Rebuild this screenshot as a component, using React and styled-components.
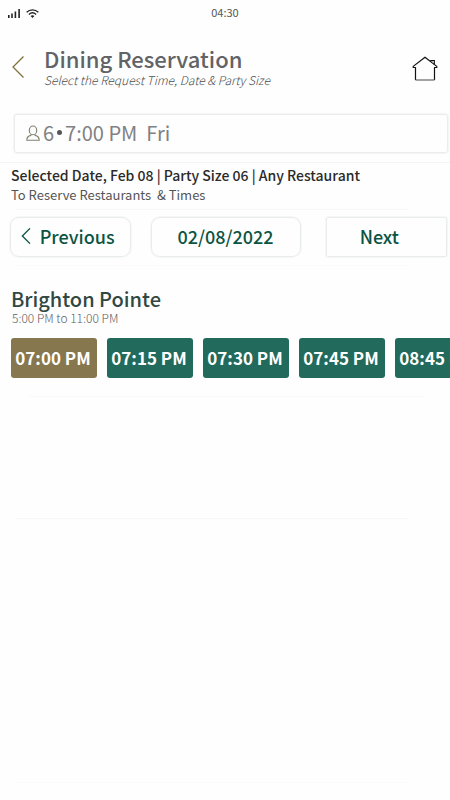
import React, { useState } from "react";
import styled, { createGlobalStyle } from "styled-components";

const GlobalStyle = createGlobalStyle`
  *, *::before, *::after { box-sizing: border-box; }
  body {
    margin: 0;
    background: #fefefe;
    font-family: "Noto Sans CJK SC", "Noto Sans", sans-serif;
  }
  h1, h2, p { margin: 0; }
  button { font: inherit; cursor: pointer; }
`;

const Page = styled.div`
  min-height: 100vh;
  display: flex;
  flex-direction: column;
  overflow-x: hidden;
`;

const StatusBar = styled.div`
  display: grid;
  grid-template-columns: 1fr auto 1fr;
  align-items: center;
  height: 24px;
  padding: 0 8px;
  font-size: 11px;
  line-height: 16px;
  color: #555;
`;

const Signals = styled.div`
  display: flex;
  align-items: center;
  gap: 6px;
  padding-top: 2px;
`;

const Header = styled.header`
  display: flex;
  align-items: flex-start;
  padding: 20px 12px 0 8px;
  height: 90px;
`;

const IconLink = styled.a`
  display: flex;
  color: ${(p) => p.$color};
  padding-top: 12px;
`;

const Titles = styled.div`
  flex: 1;
  padding-left: 16px;
`;

const Title = styled.h1`
  font-size: 22px;
  line-height: 28px;
  font-weight: 500;
  color: #626366;
`;

const Subtitle = styled.p`
  font-size: 12px;
  line-height: 16px;
  font-weight: 300;
  font-style: italic;
  color: #4c4d50;
`;

const Summary = styled.button`
  display: flex;
  align-items: center;
  height: 39px;
  margin: 0 2px 9px 14px;
  padding: 0 11px 2px;
  border: 1px solid #ececec;
  border-radius: 3px;
  box-shadow: 0 0 1px 1px #f5f5f5;
  background: transparent;
  font-size: 20px;
  line-height: 28px;
  color: #808184;
`;

const SummaryText = styled.span`
  display: flex;
  align-items: center;
  gap: 3px;
  padding-left: 3px;
  white-space: pre;
`;

const Dot = styled.i`
  width: 5px;
  height: 5px;
  border-radius: 50%;
  background: #55565a;
`;

const Rule = styled.hr`
  width: auto;
  height: 1px;
  margin: 0 ${(p) => p.$right || 0}px 0 ${(p) => p.$left || 0}px;
  border: 0;
  background: ${(p) => p.$color || "#f8f8f8"};
`;

const Selection = styled.section`
  padding: 2px 11px 4px;
  height: 46px;
`;

const SelectionTitle = styled.h2`
  font-size: 14px;
  line-height: 20px;
  font-weight: 500;
  color: #2a2a2a;
`;

const SelectionNote = styled.p`
  font-size: 13px;
  line-height: 20px;
  color: #555;
  white-space: pre;
`;

const DateNav = styled.nav`
  display: grid;
  grid-template-columns: 121fr 149fr 126fr;
  gap: 20px;
  padding: 7px 3px 8px 10px;
`;

const NavButton = styled.button`
  display: flex;
  align-items: center;
  justify-content: center;
  gap: 9px;
  height: 40px;
  margin-left: ${(p) => p.$indent || 0}px;
  padding: 0 ${(p) => p.$endPad || 6}px 2px 0;
  border: 1px solid #eaecec;
  border-radius: ${(p) => p.$radius}px;
  box-shadow: 0 0 1px 1px #f6f7f7;
  background: transparent;
  font-size: 18px;
  line-height: 26px;
  font-weight: 500;
  color: #0b5443;
`;

const Restaurant = styled.section`
  padding: 20px 0 18px 11px;
`;

const RestaurantName = styled.h2`
  font-size: 20px;
  line-height: 26px;
  font-weight: 500;
  color: #2f4842;
`;

const Hours = styled.p`
  font-size: 12px;
  line-height: 12px;
  font-weight: 300;
  color: #5c5d60;
  padding-left: 1px;
`;

const Slots = styled.div`
  display: flex;
  gap: 10px;
  margin-top: 14px;
  overflow: hidden;
`;

const Slot = styled.button`
  flex: 0 0 86px;
  height: 40px;
  padding: 0 2px 0 0;
  border: 0;
  border-radius: 3px;
  background: ${(p) => (p.$active ? "#87774f" : "#216a5c")};
  color: #fff;
  font-size: 17px;
  line-height: 24px;
  font-weight: 700;
  white-space: nowrap;
`;

const EmptyArea = styled.div`
  flex: ${(p) => (p.$grow ? "1" : "0 0 121px")};
`;

const Footer = styled.footer`
  height: 17px;
`;

const Chevron = ({ width, height, stroke = 1.3 }) => (
  <svg width={width} height={height} viewBox="0 0 12 22" fill="none" stroke="currentColor" strokeWidth={stroke} aria-hidden="true">
    <path d="M11.5 0.5 L1 11 L11.5 21.5" />
  </svg>
);

const CellularIcon = () => (
  <svg width="12" height="9" viewBox="0 0 12 9" fill="#222" aria-hidden="true">
    <path d="M0 6h1.6v3H0zM3.2 4.5h1.6V9H3.2zM6.6 2.5h1.6V9H6.6zM10.3 0h1.6v9h-1.6z" />
  </svg>
);

const WifiIcon = () => (
  <svg width="13" height="9" viewBox="0 0 13 9" fill="none" stroke="#222" strokeWidth="1.3" aria-hidden="true">
    <path d="M0.6 3.3C4 0 9 0 12.4 3.3M2.9 5.4c2.2-2 5-2 7.2 0" />
    <path d="M4.6 7.1c1.2-1 2.6-1 3.8 0L6.5 9z" fill="#222" stroke="none" />
  </svg>
);

const HomeIcon = () => (
  <svg width="26" height="26" viewBox="0 0 26 26" fill="none" stroke="#111" strokeWidth="1.2" aria-hidden="true">
    <path d="M3.5 24V11.5H1.2V10.4L13 1.2l11.8 9.2v1.1h-2.3V24" strokeLinejoin="round" />
    <path d="M18.8 5.5V4.5h3.5V8.4" />
    <path d="M19.4 5.2h1.6v2.2z" fill="#999" stroke="none" />
    <path d="M3.5 24h19" stroke="#666" />
  </svg>
);

const PersonIcon = () => (
  <svg width="14" height="16" viewBox="0 0 14 16" fill="none" stroke="#80806e" strokeWidth="1.1" aria-hidden="true">
    <ellipse cx="7" cy="5.4" rx="3.7" ry="4.4" />
    <path d="M4.9 9.2v1.2C1.8 11 0.8 12.2 0.8 15.2h12.4c0-3-1-4.2-4.1-4.8V9.2" />
  </svg>
);

const TIMES = ["07:00 PM", "07:15 PM", "07:30 PM", "07:45 PM", "08:45 PM"];

export default function App() {
  const [selected, setSelected] = useState(TIMES[0]);

  return (
    <>
      <GlobalStyle />
      <Page>
        <StatusBar>
          <Signals>
            <CellularIcon />
            <WifiIcon />
          </Signals>
          <span>04:30</span>
        </StatusBar>

        <Header>
          <IconLink href="#back" aria-label="Back" $color="#80713d">
            <Chevron width={20} height={22} />
          </IconLink>
          <Titles>
            <Title>Dining Reservation</Title>
            <Subtitle>Select the Request Time, Date &amp; Party Size</Subtitle>
          </Titles>
          <IconLink href="#home" aria-label="Home" $color="#111">
            <HomeIcon />
          </IconLink>
        </Header>

        <Summary type="button">
          <PersonIcon />
          <SummaryText>
            6<Dot />
            {"7:00 PM  Fri"}
          </SummaryText>
        </Summary>
        <Rule $color="#f4f4f4" />

        <Selection>
          <SelectionTitle>Selected Date, Feb 08 | Party Size 06 | Any Restaurant</SelectionTitle>
          <SelectionNote>{"To Reserve Restaurants  & Times"}</SelectionNote>
        </Selection>
        <Rule $left={15} $right={42} />

        <DateNav>
          <NavButton type="button" $radius={9}>
            <Chevron width={10} height={16} stroke={1.8} />
            Previous
          </NavButton>
          <NavButton type="button" $radius={9} $endPad={1}>02/08/2022</NavButton>
          <NavButton type="button" $radius={2} $indent={5} $endPad={14}>Next</NavButton>
        </DateNav>
        <Rule $left={15} $right={42} $color="#fbfbfb" />

        <Restaurant>
          <RestaurantName>Brighton Pointe</RestaurantName>
          <Hours>5:00 PM to 11:00 PM</Hours>
          <Slots>
            {TIMES.map((time) => (
              <Slot
                key={time}
                type="button"
                $active={time === selected}
                aria-pressed={time === selected}
                onClick={() => setSelected(time)}
              >
                {time}
              </Slot>
            ))}
          </Slots>
        </Restaurant>
        <Rule $left={30} $right={26} />
        <EmptyArea />
        <Rule $left={15} $right={42} />
        <EmptyArea $grow />
        <Rule $left={15} $right={42} $color="#fbfbfb" />
        <Footer />
      </Page>
    </>
  );
}
